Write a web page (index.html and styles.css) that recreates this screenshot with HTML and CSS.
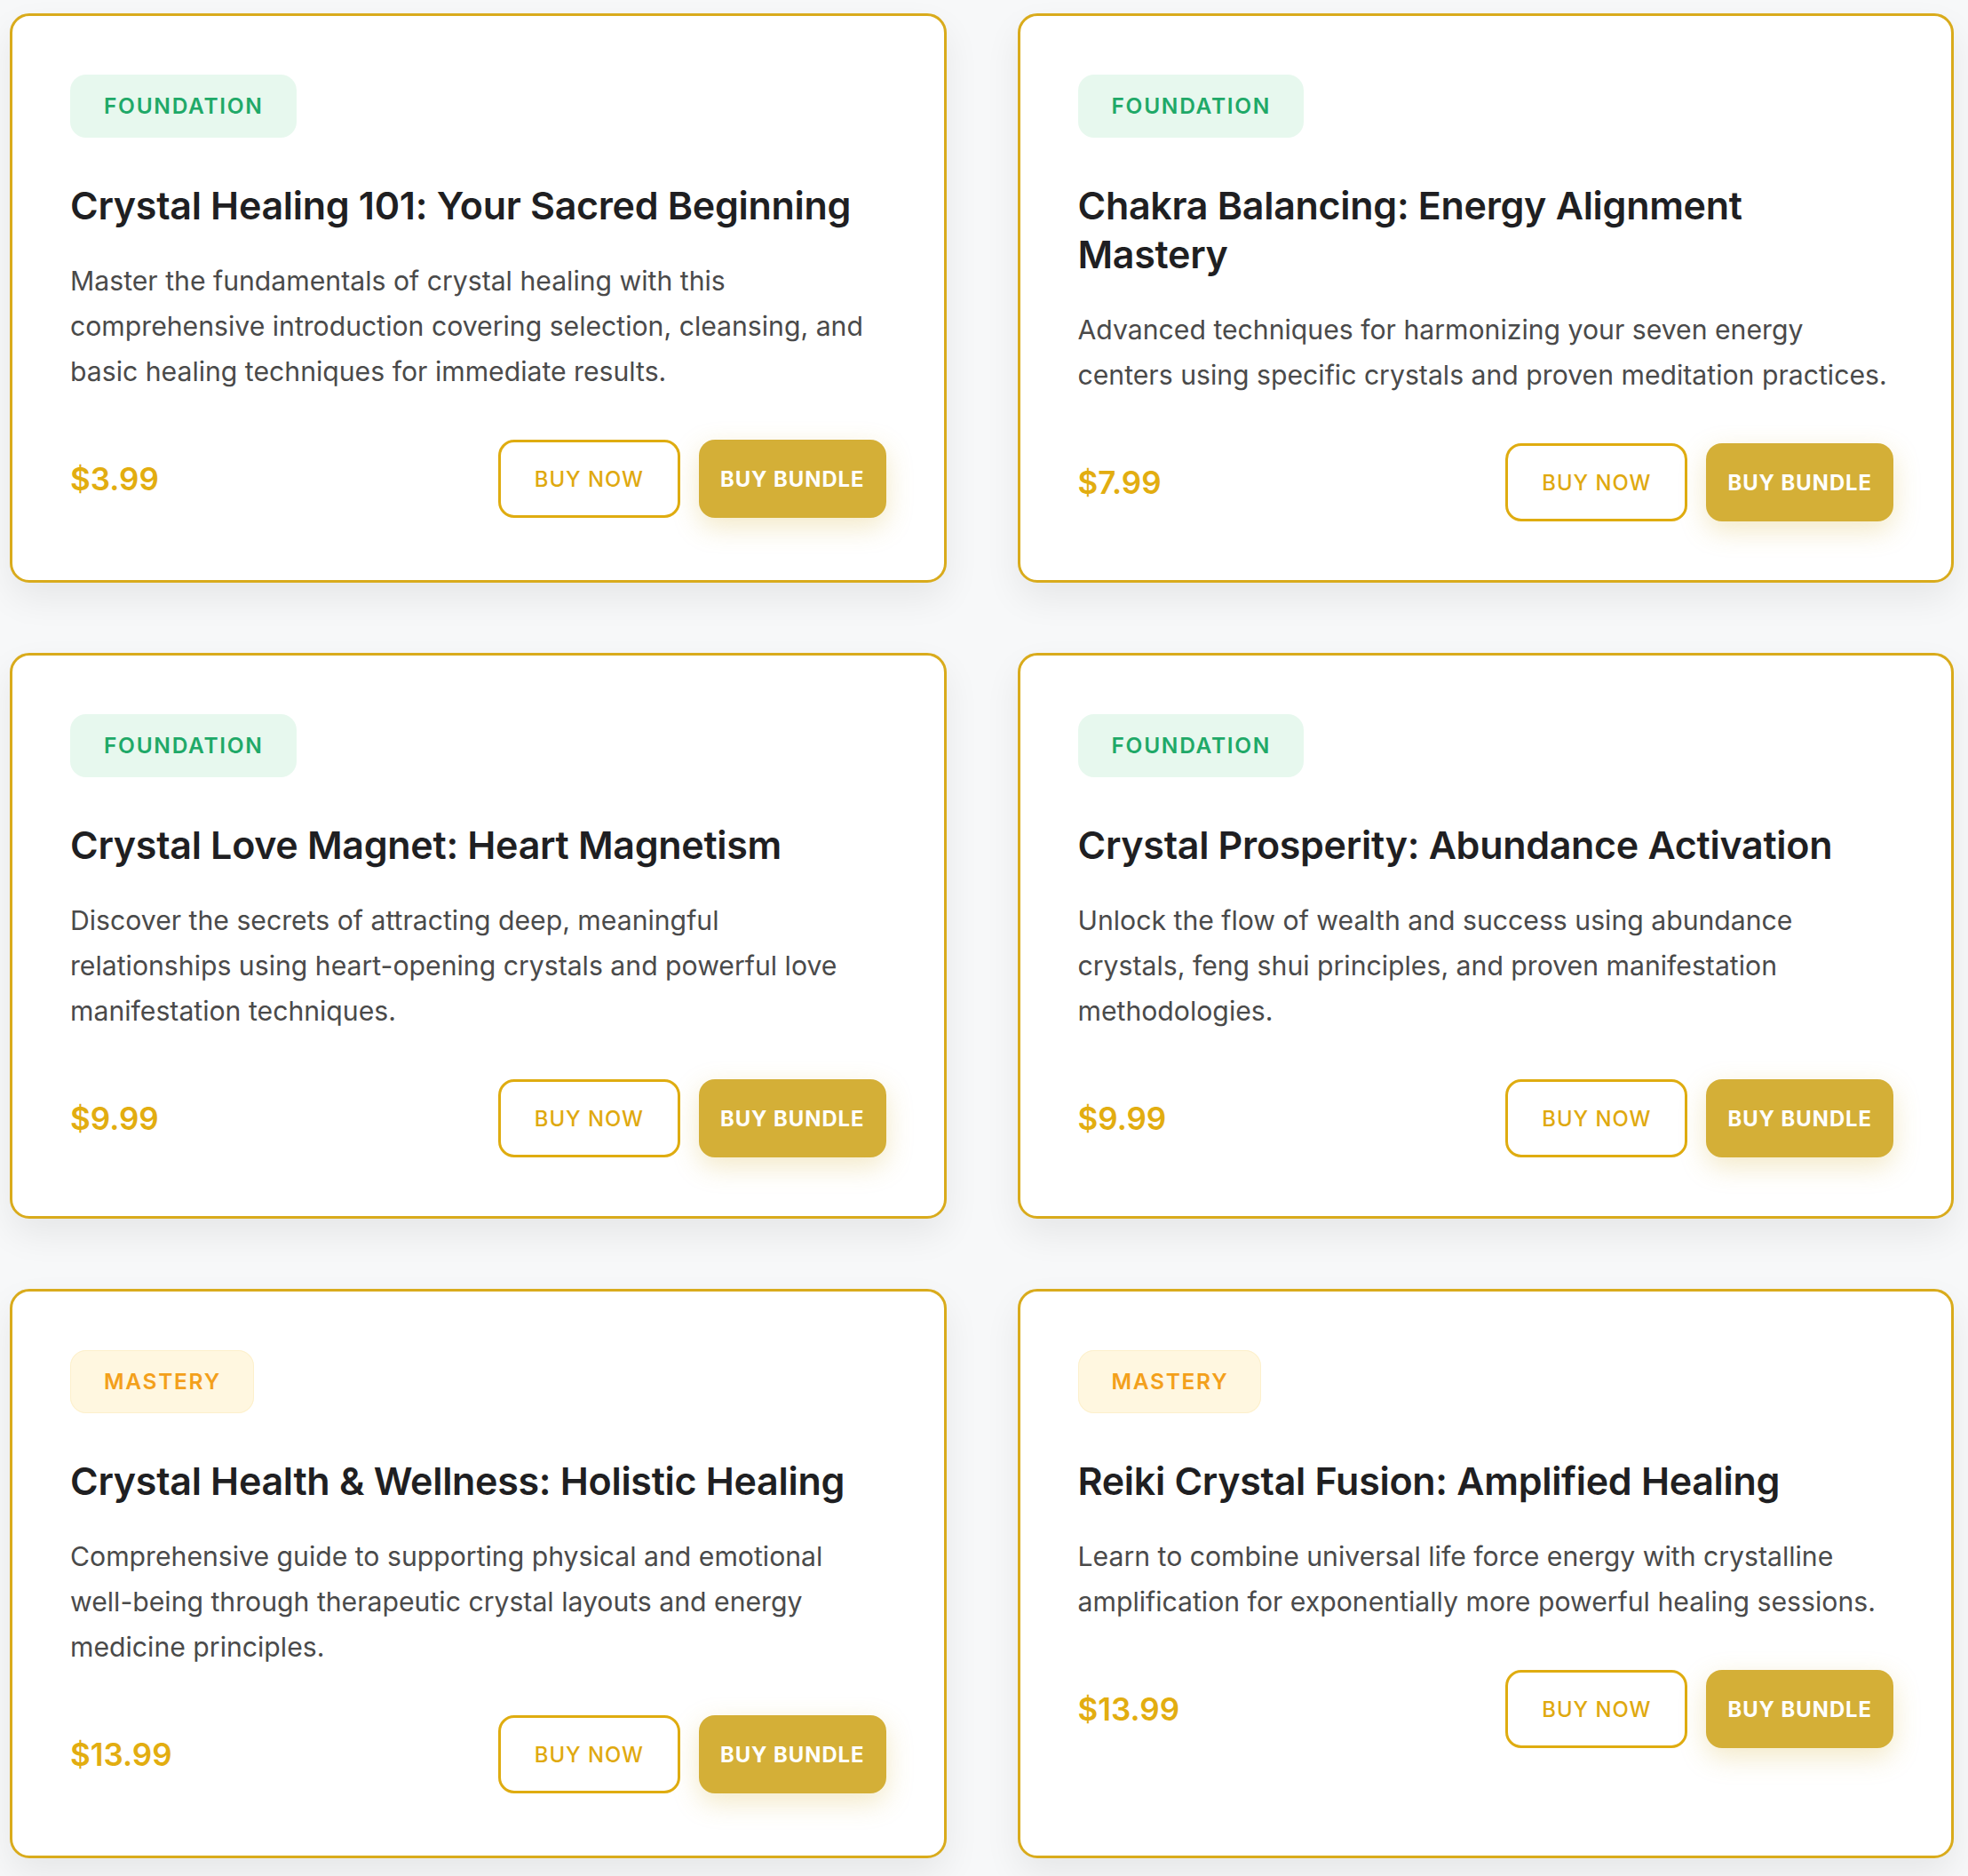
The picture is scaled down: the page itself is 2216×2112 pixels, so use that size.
FILE: index.html
```html
<!DOCTYPE html>
<html lang="en">
<head>
<meta charset="utf-8">
<title>Crystal Courses</title>
<link rel="stylesheet" href="styles.css">
</head>
<body>
<main class="grid">
  <article class="card">
    <span class="badge badge-foundation">FOUNDATION</span>
    <h2 class="title">Crystal Healing 101: Your Sacred Beginning</h2>
    <p class="desc">Master the fundamentals of crystal healing with this comprehensive introduction covering selection, cleansing, and basic healing techniques for immediate results.</p>
    <div class="footer">
      <span class="price">$3.99</span>
      <div class="actions">
        <button class="btn btn-outline">BUY NOW</button>
        <button class="btn btn-solid">BUY BUNDLE</button>
      </div>
    </div>
  </article>
  <article class="card">
    <span class="badge badge-foundation">FOUNDATION</span>
    <h2 class="title">Chakra Balancing: Energy Alignment Mastery</h2>
    <p class="desc">Advanced techniques for harmonizing your seven energy centers using specific crystals and proven meditation practices.</p>
    <div class="footer">
      <span class="price">$7.99</span>
      <div class="actions">
        <button class="btn btn-outline">BUY NOW</button>
        <button class="btn btn-solid">BUY BUNDLE</button>
      </div>
    </div>
  </article>
  <article class="card">
    <span class="badge badge-foundation">FOUNDATION</span>
    <h2 class="title">Crystal Love Magnet: Heart Magnetism</h2>
    <p class="desc">Discover the secrets of attracting deep, meaningful relationships using heart-opening crystals and powerful love manifestation techniques.</p>
    <div class="footer">
      <span class="price">$9.99</span>
      <div class="actions">
        <button class="btn btn-outline">BUY NOW</button>
        <button class="btn btn-solid">BUY BUNDLE</button>
      </div>
    </div>
  </article>
  <article class="card">
    <span class="badge badge-foundation">FOUNDATION</span>
    <h2 class="title">Crystal Prosperity: Abundance Activation</h2>
    <p class="desc">Unlock the flow of wealth and success using abundance crystals, feng shui principles, and proven manifestation methodologies.</p>
    <div class="footer">
      <span class="price">$9.99</span>
      <div class="actions">
        <button class="btn btn-outline">BUY NOW</button>
        <button class="btn btn-solid">BUY BUNDLE</button>
      </div>
    </div>
  </article>
  <article class="card">
    <span class="badge badge-mastery">MASTERY</span>
    <h2 class="title">Crystal Health &amp; Wellness: Holistic Healing</h2>
    <p class="desc">Comprehensive guide to supporting physical and emotional well-being through therapeutic crystal layouts and energy medicine principles.</p>
    <div class="footer">
      <span class="price">$13.99</span>
      <div class="actions">
        <button class="btn btn-outline">BUY NOW</button>
        <button class="btn btn-solid">BUY BUNDLE</button>
      </div>
    </div>
  </article>
  <article class="card">
    <span class="badge badge-mastery">MASTERY</span>
    <h2 class="title">Reiki Crystal Fusion: Amplified Healing</h2>
    <p class="desc">Learn to combine universal life force energy with crystalline amplification for exponentially more powerful healing sessions.</p>
    <div class="footer">
      <span class="price">$13.99</span>
      <div class="actions">
        <button class="btn btn-outline">BUY NOW</button>
        <button class="btn btn-solid">BUY BUNDLE</button>
      </div>
    </div>
  </article>
</main>
</body>
</html>
```

FILE: styles.css
```css
* {
  box-sizing: border-box;
}

html, body {
  margin: 0;
  padding: 0;
  background: #f7f8f9;
}

body {
  font-family: Inter, "Noto Sans", "Liberation Sans", sans-serif;
  color: #222;
}

.grid {
  display: grid;
  grid-template-columns: 1fr 1fr;
  column-gap: 80px;
  row-gap: 79px;
  align-items: stretch;
  padding: 15px 16px 20px 11px;
}

.card {
  display: flex;
  flex-direction: column;
  background: #fff;
  border: 3px solid #d9ab1c;
  border-radius: 22px;
  padding: 66px 65px 66px 65px;
  box-shadow: 0 18px 40px rgba(0, 0, 0, 0.07);
}

.card:nth-child(n+5) {
  padding-bottom: 70px;
}

.badge {
  align-self: flex-start;
  font-size: 24.5px;
  font-weight: 600;
  letter-spacing: 1.7px;
  line-height: 29px;
  padding: 21px 37px 21px 38px;
  border-radius: 18px;
}

.badge-foundation {
  background: #e7f8ee;
  color: #1fa968;
}

.badge-mastery {
  background: #fff7e0;
  color: #f3a01b;
  box-shadow: inset 0 0 0 1px #fdf0cc;
}

.title {
  margin: 49px 0 32px 0;
  font-size: 43px;
  line-height: 55px;
  font-weight: 560;
  color: #1f1f22;
  letter-spacing: -0.3px;
}

.desc {
  margin: 0 0 51px 0;
  font-size: 30.2px;
  line-height: 51px;
  font-weight: 400;
  color: #4a4a4a;
}

.footer {
  display: flex;
  align-items: center;
  justify-content: space-between;
}

.price {
  font-size: 35px;
  font-weight: 600;
  color: #e2ad10;
}

.actions {
  display: flex;
  gap: 21px;
}

.btn {
  font-family: Inter, "Noto Sans", "Liberation Sans", sans-serif;
  height: 88px;
  border-radius: 18px;
  font-size: 23.8px;
  letter-spacing: 1px;
  cursor: pointer;
}

.btn-outline {
  background: #fff;
  border: 3px solid #dfac10;
  color: #dfa90f;
  font-weight: 500;
  padding: 0 38px;
}

.btn-solid {
  background: #d4af37;
  border: none;
  color: #fff;
  font-weight: 700;
  padding: 0 24px;
  box-shadow: 0 10px 30px rgba(212, 175, 55, 0.28);
}
```
